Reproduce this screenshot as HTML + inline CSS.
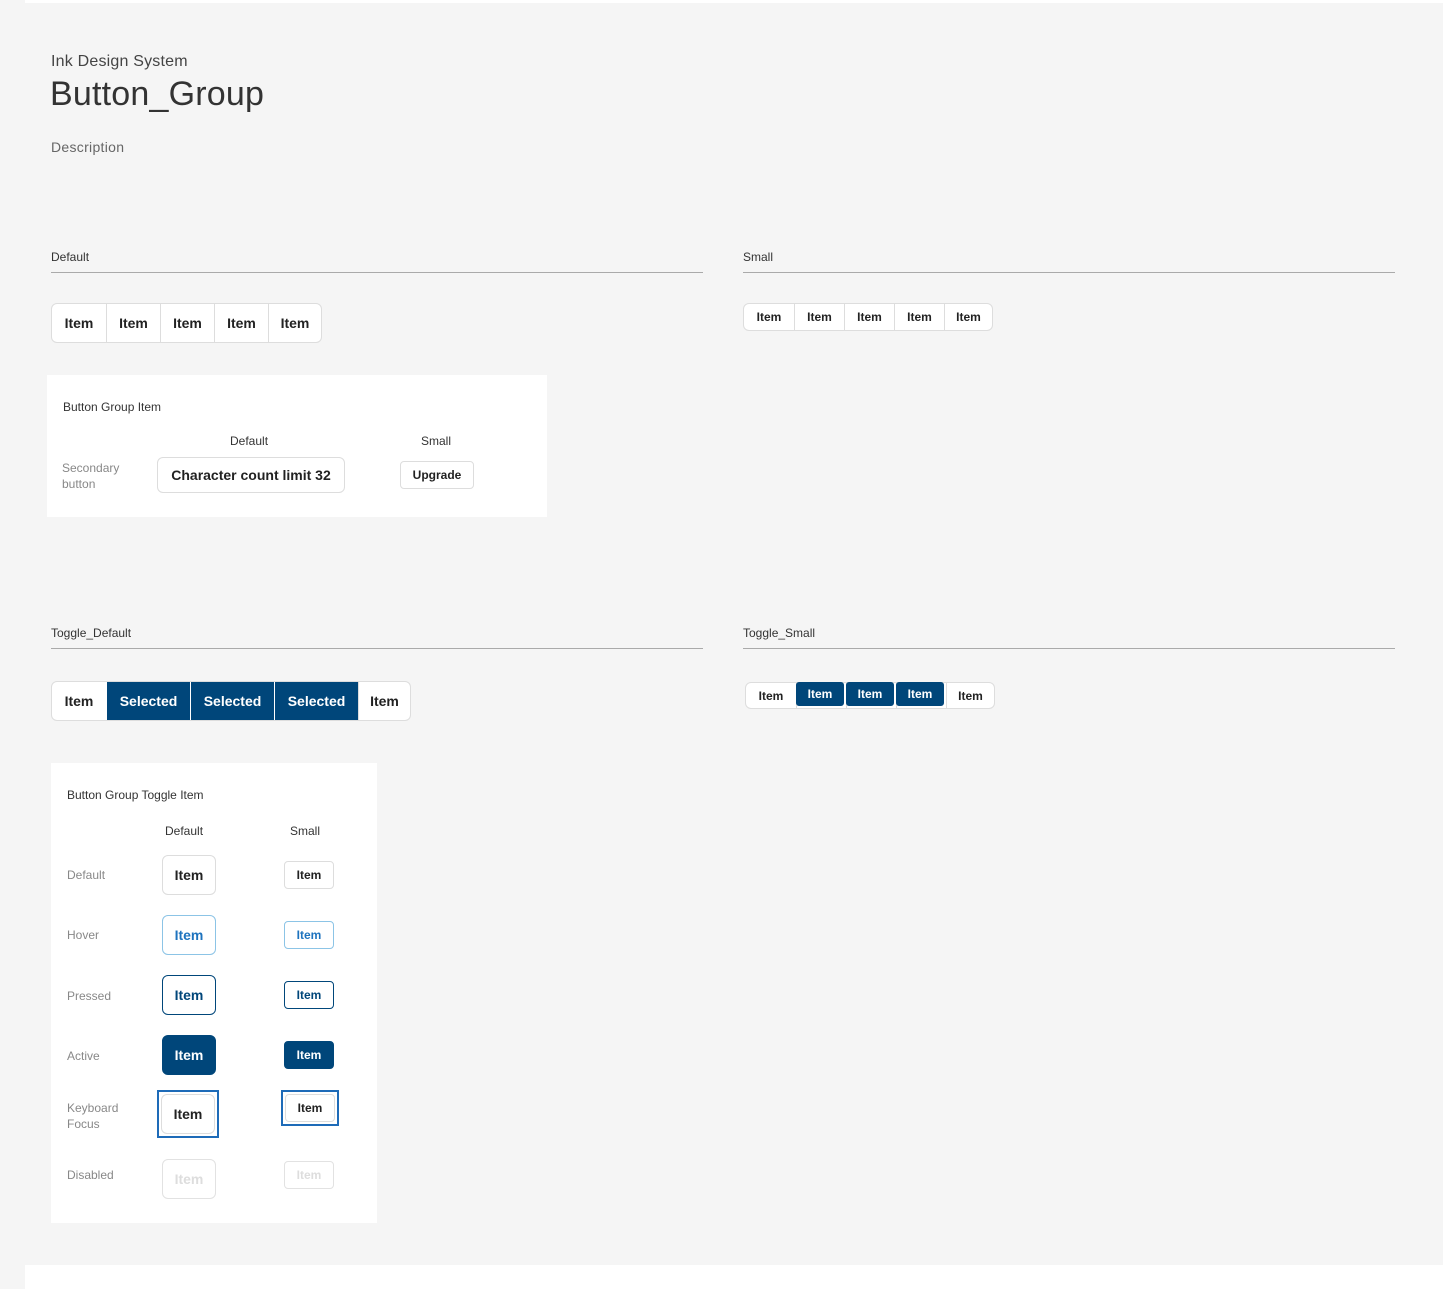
<!DOCTYPE html>
<html><head><style>
*{box-sizing:border-box;margin:0;padding:0}
body{width:1443px;height:1289px;background:#f5f5f5;font-family:"Liberation Sans",sans-serif;position:relative;overflow:hidden;color:#222}
.a{position:absolute}
.g{position:absolute;display:flex;border:1px solid #ddd;border-radius:6px;background:#fff;overflow:hidden}
.g div{display:flex;align-items:center;justify-content:center;font-weight:bold;color:#222;border-left:1px solid #ddd}
.g div:first-child{border-left:none}
.s{background:#00467a!important;color:#fff!important;border-left:1px solid #fff!important}
.lbl{font-size:12px;color:#333}
.hr{position:absolute;height:1px;background:#aaa}
.b{position:absolute;display:flex;align-items:center;justify-content:center;font-weight:bold;background:#fff;border:1px solid #ddd;border-radius:6px;color:#222}
.st{position:absolute;font-size:12px;color:#888}
</style></head><body>
<div class="a" style="left:25px;top:0;width:1418px;height:3px;background:#fff"></div>
<div class="a" style="left:25px;top:1265px;width:1418px;height:24px;background:#fff"></div>
<div class="a" style="left:51px;top:53px;font-size:16px;color:#444;letter-spacing:0.2px">Ink Design System</div>
<div class="a" style="left:50px;top:75px;font-size:34px;color:#333;letter-spacing:0.2px">Button_Group</div>
<div class="a" style="left:51px;top:139px;font-size:14px;color:#666;letter-spacing:0.3px">Description</div>

<div class="a lbl" style="left:51px;top:250px">Default</div>
<div class="hr" style="left:51px;top:272px;width:652px"></div>
<div class="a lbl" style="left:743px;top:250px">Small</div>
<div class="hr" style="left:743px;top:272px;width:652px"></div>

<div class="g" style="left:51px;top:303px;height:40px;font-size:14px">
<div style="width:54px">Item</div><div style="width:54px">Item</div><div style="width:54px">Item</div><div style="width:54px">Item</div><div style="width:53px">Item</div></div>
<div class="g" style="left:743px;top:303px;height:28px;font-size:12px">
<div style="width:50px">Item</div><div style="width:50px">Item</div><div style="width:50px">Item</div><div style="width:50px">Item</div><div style="width:48px">Item</div></div>

<div class="a" style="left:47px;top:375px;width:500px;height:142px;background:#fff"></div>
<div class="a lbl" style="left:63px;top:400px">Button Group Item</div>
<div class="a lbl" style="left:230px;top:434px">Default</div>
<div class="a lbl" style="left:421px;top:434px">Small</div>
<div class="st" style="left:62px;top:460px;line-height:16px">Secondary<br>button</div>
<div class="b" style="left:157px;top:457px;width:188px;height:36px;font-size:14px">Character count limit 32</div>
<div class="b" style="left:400px;top:461px;width:74px;height:28px;font-size:12px;border-radius:4px">Upgrade</div>

<div class="a lbl" style="left:51px;top:626px">Toggle_Default</div>
<div class="hr" style="left:51px;top:648px;width:652px"></div>
<div class="a lbl" style="left:743px;top:626px">Toggle_Small</div>
<div class="hr" style="left:743px;top:648px;width:652px"></div>

<div class="g" style="left:51px;top:681px;height:40px;font-size:14px">
<div style="width:54px">Item</div><div class="s" style="width:84px">Selected</div><div class="s" style="width:84px">Selected</div><div class="s" style="width:84px">Selected</div><div style="width:52px">Item</div></div>
<div class="g" style="left:745px;top:682px;height:27px;font-size:12px;background:#fff">
<div style="width:50px">Item</div><div style="width:50px"></div><div style="width:50px"></div><div style="width:50px"></div><div style="width:48px">Item</div></div>
<div class="b" style="left:796px;top:682px;width:48px;height:24px;font-size:12px;background:#00467a;color:#fff;border-color:#00467a;border-radius:3px">Item</div>
<div class="b" style="left:846px;top:682px;width:48px;height:24px;font-size:12px;background:#00467a;color:#fff;border-color:#00467a;border-radius:3px">Item</div>
<div class="b" style="left:896px;top:682px;width:48px;height:24px;font-size:12px;background:#00467a;color:#fff;border-color:#00467a;border-radius:3px">Item</div>

<div class="a" style="left:51px;top:763px;width:326px;height:460px;background:#fff"></div>
<div class="a lbl" style="left:67px;top:788px">Button Group Toggle Item</div>
<div class="a lbl" style="left:165px;top:824px">Default</div>
<div class="a lbl" style="left:290px;top:824px">Small</div>

<div class="st" style="left:67px;top:868px">Default</div>
<div class="b" style="left:162px;top:855px;width:54px;height:40px;font-size:14px">Item</div>
<div class="b" style="left:284px;top:861px;width:50px;height:28px;font-size:12px;border-radius:4px">Item</div>

<div class="st" style="left:67px;top:928px">Hover</div>
<div class="b" style="left:162px;top:915px;width:54px;height:40px;font-size:14px;border-color:#8cc4e6;color:#1e73be">Item</div>
<div class="b" style="left:284px;top:921px;width:50px;height:28px;font-size:12px;border-radius:4px;border-color:#8cc4e6;color:#1e73be">Item</div>

<div class="st" style="left:67px;top:989px">Pressed</div>
<div class="b" style="left:162px;top:975px;width:54px;height:40px;font-size:14px;border-color:#00467a;color:#00467a">Item</div>
<div class="b" style="left:284px;top:981px;width:50px;height:28px;font-size:12px;border-radius:4px;border-color:#00467a;color:#00467a">Item</div>

<div class="st" style="left:67px;top:1049px">Active</div>
<div class="b" style="left:162px;top:1035px;width:54px;height:40px;font-size:14px;background:#00467a;border-color:#00467a;color:#fff">Item</div>
<div class="b" style="left:284px;top:1041px;width:50px;height:28px;font-size:12px;border-radius:4px;background:#00467a;border-color:#00467a;color:#fff">Item</div>

<div class="st" style="left:67px;top:1100px;line-height:16px">Keyboard<br>Focus</div>
<div class="a" style="left:157px;top:1090px;width:62px;height:48px;border:2px solid #1e6bb8"></div>
<div class="b" style="left:161px;top:1094px;width:54px;height:40px;font-size:14px">Item</div>
<div class="a" style="left:281px;top:1090px;width:58px;height:36px;border:2px solid #1e6bb8"></div>
<div class="b" style="left:285px;top:1094px;width:50px;height:28px;font-size:12px;border-radius:4px">Item</div>

<div class="st" style="left:67px;top:1168px">Disabled</div>
<div class="b" style="left:162px;top:1159px;width:54px;height:40px;font-size:14px;border-color:#e2e2e2;color:#ddd">Item</div>
<div class="b" style="left:284px;top:1161px;width:50px;height:28px;font-size:12px;border-radius:4px;border-color:#e2e2e2;color:#ddd">Item</div>
</body></html>
